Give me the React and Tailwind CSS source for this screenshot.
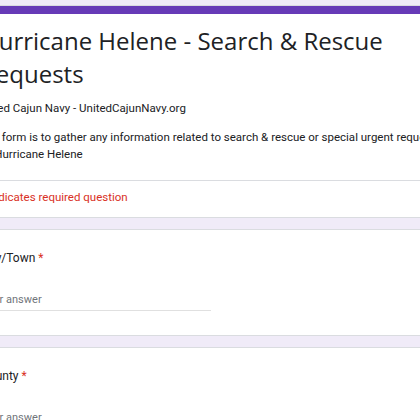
import React from 'react';

const body = { fontFamily: 'Roboto, "Liberation Sans", sans-serif' };
const heading = { fontFamily: '"Open Sans", Roboto, sans-serif' };

const Question = ({ label }) => (
  <div className="rounded-lg bg-white border border-[#dadce0] px-6 pt-[19px] pb-[24px]" style={body}>
    <div className="text-[12px] leading-[18px] text-[#202124]">
      {label} <span className="text-[#d93025]">*</span>
    </div>
    <div className="mt-[25px] w-[230px] border-b border-[#e0e0e0] pb-[2px] text-[11px] leading-4 text-[#70757a]">
      Your answer
    </div>
  </div>
);

export default function App() {
  return (
    <div className="w-[420px] h-[420px] overflow-hidden bg-[#f0ebf8]">
      <div className="ml-[-44px] w-[640px] pt-[5px] flex flex-col gap-[11px]">
        <div className="rounded-lg bg-white border border-[#dadce0] overflow-hidden">
          <div className="h-[8px] bg-[#673ab7]" />
          <div className="px-6 pt-[10px] pb-[17px]">
            <h1 className="text-[24px] leading-[33px] text-[#202124]" style={heading}>
              Hurricane Helene - Search &amp; Rescue
              <br />
              Requests
            </h1>
            <p className="mt-[10px] -ml-1 text-[11.5px] leading-4 text-[#202124]" style={body}>
              United Cajun Navy - UnitedCajunNavy.org
            </p>
            <p className="mt-[13px] -ml-1 text-[11.5px] leading-[17px] text-[#202124]" style={body}>
              This form is to gather any information related to search &amp; rescue or special urgent requests
              <br />
              for Hurricane Helene
            </p>
          </div>
          <div className="border-t border-[#dadce0] px-6 pt-[8px] pb-[12px] text-[11.5px] leading-4 text-[#d93025]" style={body}>
            * Indicates required question
          </div>
        </div>
        <Question label="City/Town" />
        <Question label="County" />
      </div>
    </div>
  );
}
